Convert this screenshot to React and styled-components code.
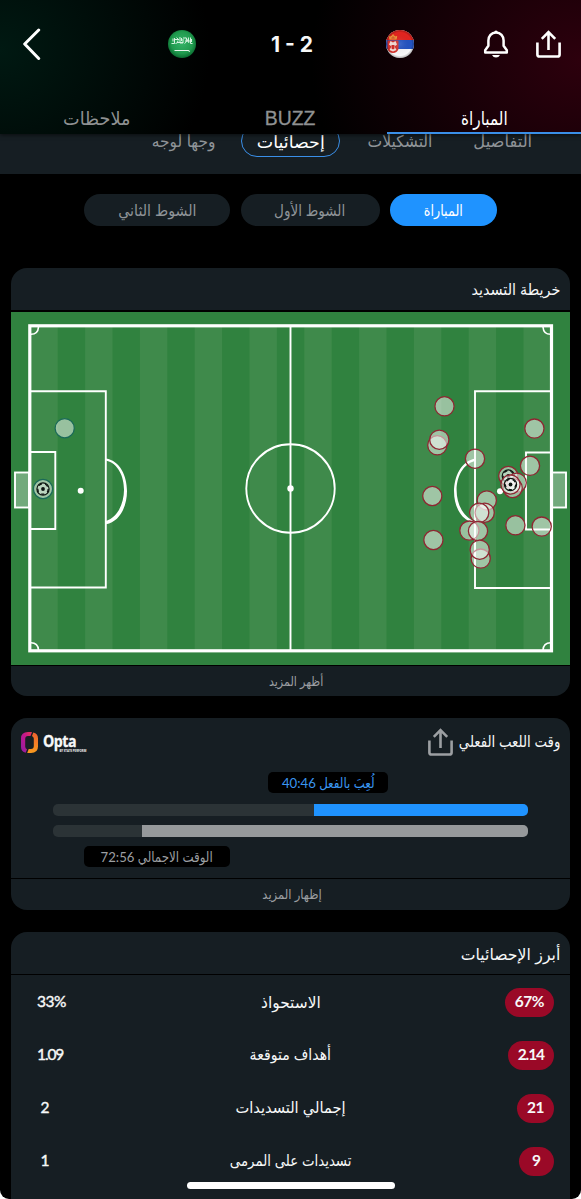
import React from 'react';
import styled, { createGlobalStyle } from 'styled-components';

const c = {
  panel: '#161e23',
  blue: '#1f93ff',
  muted: '#9c9fa2',
  white: '#f7f8f8',
  red: '#9a0927',
  grass: '#30823f',
  grassLight: '#3f8a4b',
};

const Global = createGlobalStyle`
  * { box-sizing: border-box; }
  html, body { margin: 0; background: #fff; }
  body { font-family: Lato, "DejaVu Sans Condensed", "DejaVu Sans", sans-serif; font-stretch: condensed; }
  svg { display: block; flex: none; }
`;

const Screen = styled.div`
  position: relative;
  width: 581px;
  height: 1199px;
  overflow: hidden;
  background: #000;
  border-radius: 0 0 9px 9px;
  color: ${c.white};
  display: flex;
  flex-direction: column;
`;

const Label = styled.span`
  display: block;
  white-space: nowrap;
  line-height: 1;
  font-size: ${(p) => p.$size || 15}px;
  color: ${(p) => p.$color || 'inherit'};
  transform: translate(${(p) => p.$dx || 0}px, ${(p) => p.$dy || 0}px) scaleX(${(p) => p.$sx || 1});
  transform-origin: ${(p) => p.$origin || 'center'};
`;

const Header = styled.header`
  position: relative;
  z-index: 2;
  flex: none;
  height: 134px;
  display: flex;
  flex-direction: column;
  background:
    radial-gradient(ellipse 210px 190px at 0 50px, #001912, rgba(0, 20, 15, 0)),
    radial-gradient(ellipse 270px 230px at 581px 60px, #2d000d, rgba(30, 0, 8, 0)),
    #000;
  box-shadow: 0 1px 4px rgba(0, 0, 0, 0.6);
`;

const MatchRow = styled.div`
  direction: ltr;
  height: 88px;
  display: grid;
  grid-template-columns: 145px 28px 1fr 28px 147px;
  padding: 0 20px 0 23px;
  align-items: center;
`;

const Score = styled.div`
  font: 700 21px/1 Inter, sans-serif;
  text-align: center;
  padding-left: 2px;
`;

const Actions = styled.div`
  display: flex;
  justify-content: flex-end;
  gap: 27px;
`;

const Tabs = styled.nav`
  height: 46px;
  display: grid;
  grid-template-columns: repeat(3, 1fr);
`;

const Tab = styled.div`
  display: flex;
  justify-content: center;
  align-items: center;
  padding-top: 16px;
  color: ${(p) => (p.$active ? '#fff' : '#8f9192')};
  border-bottom: 2.5px solid ${(p) => (p.$active ? '#3a8fe8' : 'transparent')};
`;

const Latin = styled(Label)`
  font-family: "Liberation Sans", sans-serif;
  -webkit-text-stroke: 0.3px currentColor;
`;

const SubTabs = styled.nav`
  flex: none;
  height: 58px;
  margin-top: -18px;
  padding: 9px 34px 17px;
  display: flex;
  align-items: center;
  background: ${c.panel};
`;

const SubTab = styled.div`
  width: ${(p) => p.$w}px;
  height: 32px;
  display: flex;
  align-items: center;
  justify-content: center;
  border: 1.5px solid ${(p) => (p.$active ? '#3a8fe8' : 'transparent')};
  border-radius: 16px;
  color: ${(p) => (p.$active ? '#fff' : '#8f9498')};
`;

const Periods = styled.div`
  flex: none;
  display: flex;
  justify-content: center;
  gap: 10.5px;
  padding: 20px 0 42px;
`;

const Period = styled.div`
  width: ${(p) => p.$w}px;
  height: 32px;
  padding-top: 1px;
  border-radius: 16px;
  display: flex;
  align-items: center;
  justify-content: center;
  background: ${(p) => (p.$active ? c.blue : c.panel)};
  color: ${(p) => (p.$active ? '#fff' : '#8f9498')};
`;

const Card = styled.section`
  flex: ${(p) => (p.$last ? '1 0 auto' : 'none')};
  margin: 0 11px ${(p) => (p.$last ? 0 : 22)}px;
  border-radius: ${(p) => (p.$last ? '16px 16px 0 0' : '16px')};
  overflow: hidden;
  background: ${c.panel};
`;

const CardHead = styled.div`
  height: ${(p) => p.$h || 43}px;
  padding: 2px 10px 0;
  display: flex;
  align-items: center;
  border-bottom: ${(p) => (p.$h ? 2 : 1)}px solid #000;
`;

const CardFoot = styled.div`
  height: ${(p) => p.$h || 31}px;
  display: flex;
  align-items: center;
  justify-content: center;
  border-top: 1px solid #000;
  color: ${c.muted};
`;

const TimeHead = styled.div`
  height: 48px;
  padding: 0 10px;
  display: flex;
  align-items: center;
  gap: 1px;
`;

const Logo = styled.div`
  direction: ltr;
  margin-right: auto;
  display: flex;
  align-items: center;
  gap: 5px;
`;

const LogoText = styled.div`
  width: 43px;
  height: 21px;
  display: flex;
  flex-direction: column;
`;

const LogoName = styled.span`
  font: 700 16.5px/17px "Open Sans", sans-serif;
  letter-spacing: -0.6px;
  -webkit-text-stroke: 0.3px currentColor;
  transform: scaleX(0.86);
  transform-origin: 0 0;
`;

const LogoSub = styled.span`
  align-self: flex-end;
  white-space: nowrap;
  font: 700 6px/6px "Open Sans", sans-serif;
  transform: scale(0.47, 0.5);
  transform-origin: 100% 0;
`;

const TimeBody = styled.div`
  height: 112px;
  padding: 6px 42px 0;
  display: flex;
  flex-direction: column;
`;

const Chip = styled.div`
  align-self: flex-start;
  width: ${(p) => p.$w}px;
  height: 21px;
  margin-inline-start: ${(p) => p.$offset}px;
  border-radius: 5px;
  display: flex;
  align-items: center;
  justify-content: center;
  background: #000;
`;

const Track = styled.div`
  height: 12px;
  margin: ${(p) => p.$margin};
  border-radius: 5px;
  overflow: hidden;
  background: #2b3336;
`;

const Fill = styled.div`
  height: 100%;
  background: ${(p) => p.$color};
`;

const StatRow = styled.div`
  height: 53px;
  padding: 1px 16px 0;
  display: grid;
  grid-template-columns: 100px 1fr 100px;
  align-items: center;
  justify-items: center;
`;

const Value = styled.div`
  justify-self: ${(p) => (p.$lead ? 'start' : 'end')};
  min-width: 35.5px;
  height: 29px;
  padding: 0 10px;
  border-radius: 15px;
  display: flex;
  align-items: center;
  justify-content: center;
  background: ${(p) => (p.$lead ? c.red : 'transparent')};
  font: ${(p) => (p.$lead ? 700 : 400)} 15.5px/1 Lato, sans-serif;
  letter-spacing: ${(p) => (p.$tight ? -1.1 : -0.5)}px;
  -webkit-text-stroke: ${(p) => (p.$lead ? 0 : 0.4)}px currentColor;
`;

const HomeBar = styled.div`
  position: absolute;
  left: 187px;
  bottom: 10.5px;
  width: 207.5px;
  height: 7px;
  border-radius: 4px;
  background: #fff;
`;

const BackIcon = () => (
  <svg width="18" height="32" viewBox="0 0 18 32" fill="none" stroke="#fff" strokeWidth="3" strokeLinecap="round" strokeLinejoin="round">
    <path d="M15.700 2 1.700 16l14 14.500" />
  </svg>
);

const ShareIcon = ({ color = '#fff', w = 25 }) => (
  <svg width={w} height={w * 1.12} viewBox="0 0 25 28" fill="none" stroke={color} strokeWidth="2.600">
    <path d="M1.400 12.500V24.400Q1.400 26.500 3.500 26.500H21.500Q23.600 26.500 23.600 24.400V12.500M12.500 20V2M5.800 8.800 12.500 2.100l6.700 6.700" />
  </svg>
);

const BellIcon = () => (
  <svg width="26" height="28" viewBox="0 0 26 28">
    <path d="M13 2.600C8.400 2.600 5.400 6.100 5.400 10.600v5.200L2.200 20.300v2.100h21.600v-2.100l-3.200-4.500v-5.200C20.600 6.100 17.600 2.600 13 2.600Z" fill="none" stroke="#fff" strokeWidth="2.500" strokeLinejoin="round" />
    <path d="M11.200 2.400a1.800 1.800 0 0 1 3.600 0zM9 25h8q-1.300 2.600-4 2.600T9 25z" fill="#fff" />
  </svg>
);

const SaudiFlag = () => (
  <svg width="28" height="28" viewBox="0 0 28 28">
    <defs>
      <radialGradient id="sa" cx=".5" cy=".45" r=".55">
        <stop offset="0" stopColor="#35b469" />
        <stop offset=".7" stopColor="#209a4e" />
        <stop offset="1" stopColor="#0a6b30" />
      </radialGradient>
    </defs>
    <circle cx="14" cy="14" r="14" fill="url(#sa)" />
    <g fill="none" stroke="#d5f2df" strokeWidth="1">
      <path d="M3.500 13.500h3V8M5 8.500v3M7.500 13.500q2.500 0 2.500-3M8.500 7.500l2 2M12 7v6h3V9M13.500 8v3M16.500 13.500q2.500-.5 2-5M18 7.500l3 5.500M20.500 7.500v4M22.500 7.500v6h2M9 12.500h6M17 11h6M6 9.500h5M15 8h3M23.500 9v3" />
      <path d="M6.500 20.500h14M20 20.500l2 1" stroke="#fff" strokeWidth=".9" />
    </g>
  </svg>
);

const SerbiaFlag = () => (
  <svg width="28" height="28" viewBox="0 0 28 28">
    <defs>
      <clipPath id="rsClip"><circle cx="14" cy="14" r="14" /></clipPath>
      <radialGradient id="rs" cx=".5" cy=".5" r=".5">
        <stop offset="0" stopColor="#fff" stopOpacity=".12" />
        <stop offset=".82" stopColor="#000" stopOpacity="0" />
        <stop offset="1" stopColor="#000" stopOpacity=".28" />
      </radialGradient>
    </defs>
    <g clipPath="url(#rsClip)">
      <rect width="28" height="28" fill="#f8f8fa" />
      <rect width="28" height="10" fill="#e3241f" />
      <rect y="10" width="28" height="9" fill="#2353c2" />
      <path d="M1.500 10.500h11v8.500q-1.500 4-5.500 4t-5.500-4z" fill="#d3312b" />
      <path d="M7 12.500 4.500 11 3 14.500l2.500 2L3.500 20l3.500 1.500 3.500-1.500-2-3.500 2.500-2L9.500 11z" fill="#f3dcd6" />
      <path d="M5.500 15h3v3.500L7 19.500l-1.500-1z" fill="#cf2a26" />
      <path d="M3.500 9.500 2.800 6l2.200.5L7 4l2 2.500 2.200-.5-.7 3.500z" fill="#f0a13a" />
      <path d="M4.500 8h5M7 5.500v3" stroke="#c9372a" strokeWidth=".8" />
      <circle cx="14" cy="14" r="14" fill="url(#rs)" />
    </g>
  </svg>
);

const OptaMark = () => (
  <svg width="17" height="21" viewBox="0 0 17 21">
    <defs>
      <linearGradient id="om" x1="0" y1="1" x2="1" y2="0">
        <stop offset="0" stopColor="#8b1fa3" /><stop offset=".6" stopColor="#c4178a" /><stop offset="1" stopColor="#ea3a4e" />
      </linearGradient>
      <linearGradient id="oo" x1="0" y1="0" x2="0" y2="1">
        <stop offset="0" stopColor="#f0602f" /><stop offset="1" stopColor="#f79a1e" />
      </linearGradient>
    </defs>
    <path d="M11 0H7Q0 0 0 6.500V15q0 4.500 4.700 5.800L6 17.200Q4.200 16.500 4.200 14.500V7Q4.200 4 7 4H9.500Z" fill="url(#om)" />
    <path d="M12.300.4Q17 1.500 17 6.500V14.500Q17 21 10 21H6.200L7.700 17H10q2.800 0 2.800-3V6.500Q12.800 5 11 4Z" fill="url(#oo)" />
  </svg>
);

const stripes = Array.from({ length: 10 }, (_, i) => 30.3 + i * 54.8);

const awayShots = [
  [534.4, 428.6], [444.5, 406.3], [437.3, 445.3], [439.3, 439.7], [475, 458.7],
  [530, 465.8], [508.3, 476, true], [516.7, 482.7], [512.7, 488], [510.5, 484.5, true],
  [432.3, 496], [486.8, 500.4], [484.7, 512.7], [479.2, 512.8], [469.4, 530.6],
  [478, 531], [515.4, 525.3], [541.7, 526.6], [433.4, 540], [480.7, 558.6], [479.7, 549.7],
];
const homeShots = [[64.7, 428.2], [43, 489, true]];

const Shot = ({ x, y, goal, color }) => (
  <g transform={`translate(${x} ${y})`}>
    <circle r="9.600" fill="#fff" fillOpacity=".5" stroke={color} strokeWidth="1.300" />
    {goal && (
      <g fill="none" stroke="#0c1410">
        <circle r="6.100" fill="#fff" fillOpacity=".3" strokeWidth="1.200" />
        <circle r="5.200" strokeWidth="1.300" strokeDasharray="3.200 3.330" />
        <circle r="1.900" fill="#0c1410" stroke="none" />
      </g>
    )}
  </g>
);

const Pitch = () => (
  <svg width="559" height="353" viewBox="11 312 559 353">
    <rect x="11" y="311" width="559" height="355" fill={c.grass} />
    {stripes.map((x) => (
      <rect key={x} x={x} y="326" width="27.400" height="325" fill={c.grassLight} />
    ))}
    <g fill="none" stroke="#fff" strokeWidth="1.900">
      <rect x="29.800" y="325.800" width="521.700" height="325" strokeWidth="3.200" />
      <path d="M290.500 326V651" />
      <circle cx="290.500" cy="488.500" r="44.200" />
      <path d="M30 391.200H105.800V587.500H30M30 452H55.300V529H30M551 391.200H475V588H551M551 452.500H526V529.500H551" />
      <path d="M38.500 327q-.5 7.300-7.500 7.300M543 327q.5 7.300 7.500 7.300M38.500 650q-.5-7.300-7.500-7.300M543 650q.5-7.300 7.500-7.300" strokeWidth="1.600" />
      <rect x="15" y="472.500" width="14" height="35" fill="#fff" fillOpacity=".32" />
      <rect x="552" y="472.500" width="14" height="35" fill="#fff" fillOpacity=".32" />
    </g>
    <g fill="#fff">
      <circle cx="290.500" cy="488.500" r="3.200" />
      <circle cx="80.700" cy="490.700" r="3" />
      <circle cx="500" cy="491.200" r="3" />
      <path d="M106 458.500C134 463 134 519 106 524.300V521C130 513 130 466 106 460.500Z" />
      <path d="M475 458.500C449 464 447 512 470 521.500L475 524V521.500C450 512 451 467 475 461Z" />
    </g>
    {homeShots.map(([x, y, g]) => <Shot key={x} x={x} y={y} goal={g} color="#1a6a58" />)}
    {awayShots.map(([x, y, g]) => <Shot key={`${x}-${y}`} x={x} y={y} goal={g} color="#8f2632" />)}
  </svg>
);

const stats = [
  { lead: '67%', name: 'الاستحواذ', other: '33%', size: 16, sx: 1.07 },
  { lead: '2.14', name: 'أهداف متوقعة', other: '1.09', size: 15.5, sx: 1.01, tight: true },
  { lead: '21', name: 'إجمالي التسديدات', other: '2', size: 15.5, sx: 1.05 },
  { lead: '9', name: 'تسديدات على المرمى', other: '1', size: 15.5, sx: 0.955 },
];

export default function App() {
  return (
    <Screen dir="rtl">
      <Global />
      <Header>
        <MatchRow>
          <BackIcon />
          <SaudiFlag />
          <Score>1 - 2</Score>
          <SerbiaFlag />
          <Actions><BellIcon /><ShareIcon /></Actions>
        </MatchRow>
        <Tabs>
          <Tab $active><Label $size={18.5} $sx={0.92}>المباراة</Label></Tab>
          <Tab><Latin $size={20} $sx={0.97}>BUZZ</Latin></Tab>
          <Tab><Label $size={18.5} $sx={1.06}>ملاحظات</Label></Tab>
        </Tabs>
      </Header>
      <SubTabs>
        <SubTab $w={88}><Label $size={16.5} $sx={1.1}>التفاصيل</Label></SubTab>
        <SubTab $w={119}><Label $size={16.5} $sx={1.05}>التشكيلات</Label></SubTab>
        <SubTab $w={99} $active><Label $size={17} $sx={1.14}>إحصائيات</Label></SubTab>
        <SubTab $w={115}><Label $size={16.5} $sx={1.04}>وجها لوجه</Label></SubTab>
      </SubTabs>
      <Periods>
        <Period $w={107} $active><Label $size={15.5} $sx={0.92}>المباراة</Label></Period>
        <Period $w={139}><Label $size={15.5} $sx={0.97}>الشوط الأول</Label></Period>
        <Period $w={146}><Label $size={15.5} $sx={1.02}>الشوط الثاني</Label></Period>
      </Periods>
      <Card>
        <CardHead $h={44}><Label $size={15.5} $sx={1.03} $origin="right">خريطة التسديد</Label></CardHead>
        <Pitch />
        <CardFoot><Label $size={13} $sx={0.95} $dx={5.5}>أظهر المزيد</Label></CardFoot>
      </Card>
      <Card>
        <TimeHead>
          <Label $size={15.5} $sx={0.955} $origin="right">وقت اللعب الفعلي</Label>
          <ShareIcon color={c.muted} w={25} />
          <Logo>
            <OptaMark />
            <LogoText><LogoName>Opta</LogoName><LogoSub>BY STATS PERFORM</LogoSub></LogoText>
          </Logo>
        </TimeHead>
        <TimeBody>
          <Chip $w={120} $offset={140}><Label $size={14} $sx={0.94} $color="#3a96f0">لُعِبَ بالفعل 40:46</Label></Chip>
          <Track $margin="11px 0 9px"><Fill $color={c.blue} style={{ width: '45%' }} /></Track>
          <Track $margin="0 0 9px"><Fill $color="#96999b" style={{ width: '81.2%' }} /></Track>
          <Chip $w={146} $offset={298}><Label $size={14} $sx={0.94} $color={c.muted}>الوقت الاجمالي 72:56</Label></Chip>
        </TimeBody>
        <CardFoot $h={32}><Label $size={13} $sx={0.99} $dx={1}>إظهار المزيد</Label></CardFoot>
      </Card>
      <Card $last>
        <CardHead><Label $size={16} $sx={1.09} $origin="right">أبرز الإحصائيات</Label></CardHead>
        {stats.map((s) => (
          <StatRow key={s.name}>
            <Value $lead $tight={s.tight}>{s.lead}</Value>
            <Label $size={s.size} $sx={s.sx}>{s.name}</Label>
            <Value $tight={s.tight}>{s.other}</Value>
          </StatRow>
        ))}
      </Card>
      <HomeBar />
    </Screen>
  );
}
